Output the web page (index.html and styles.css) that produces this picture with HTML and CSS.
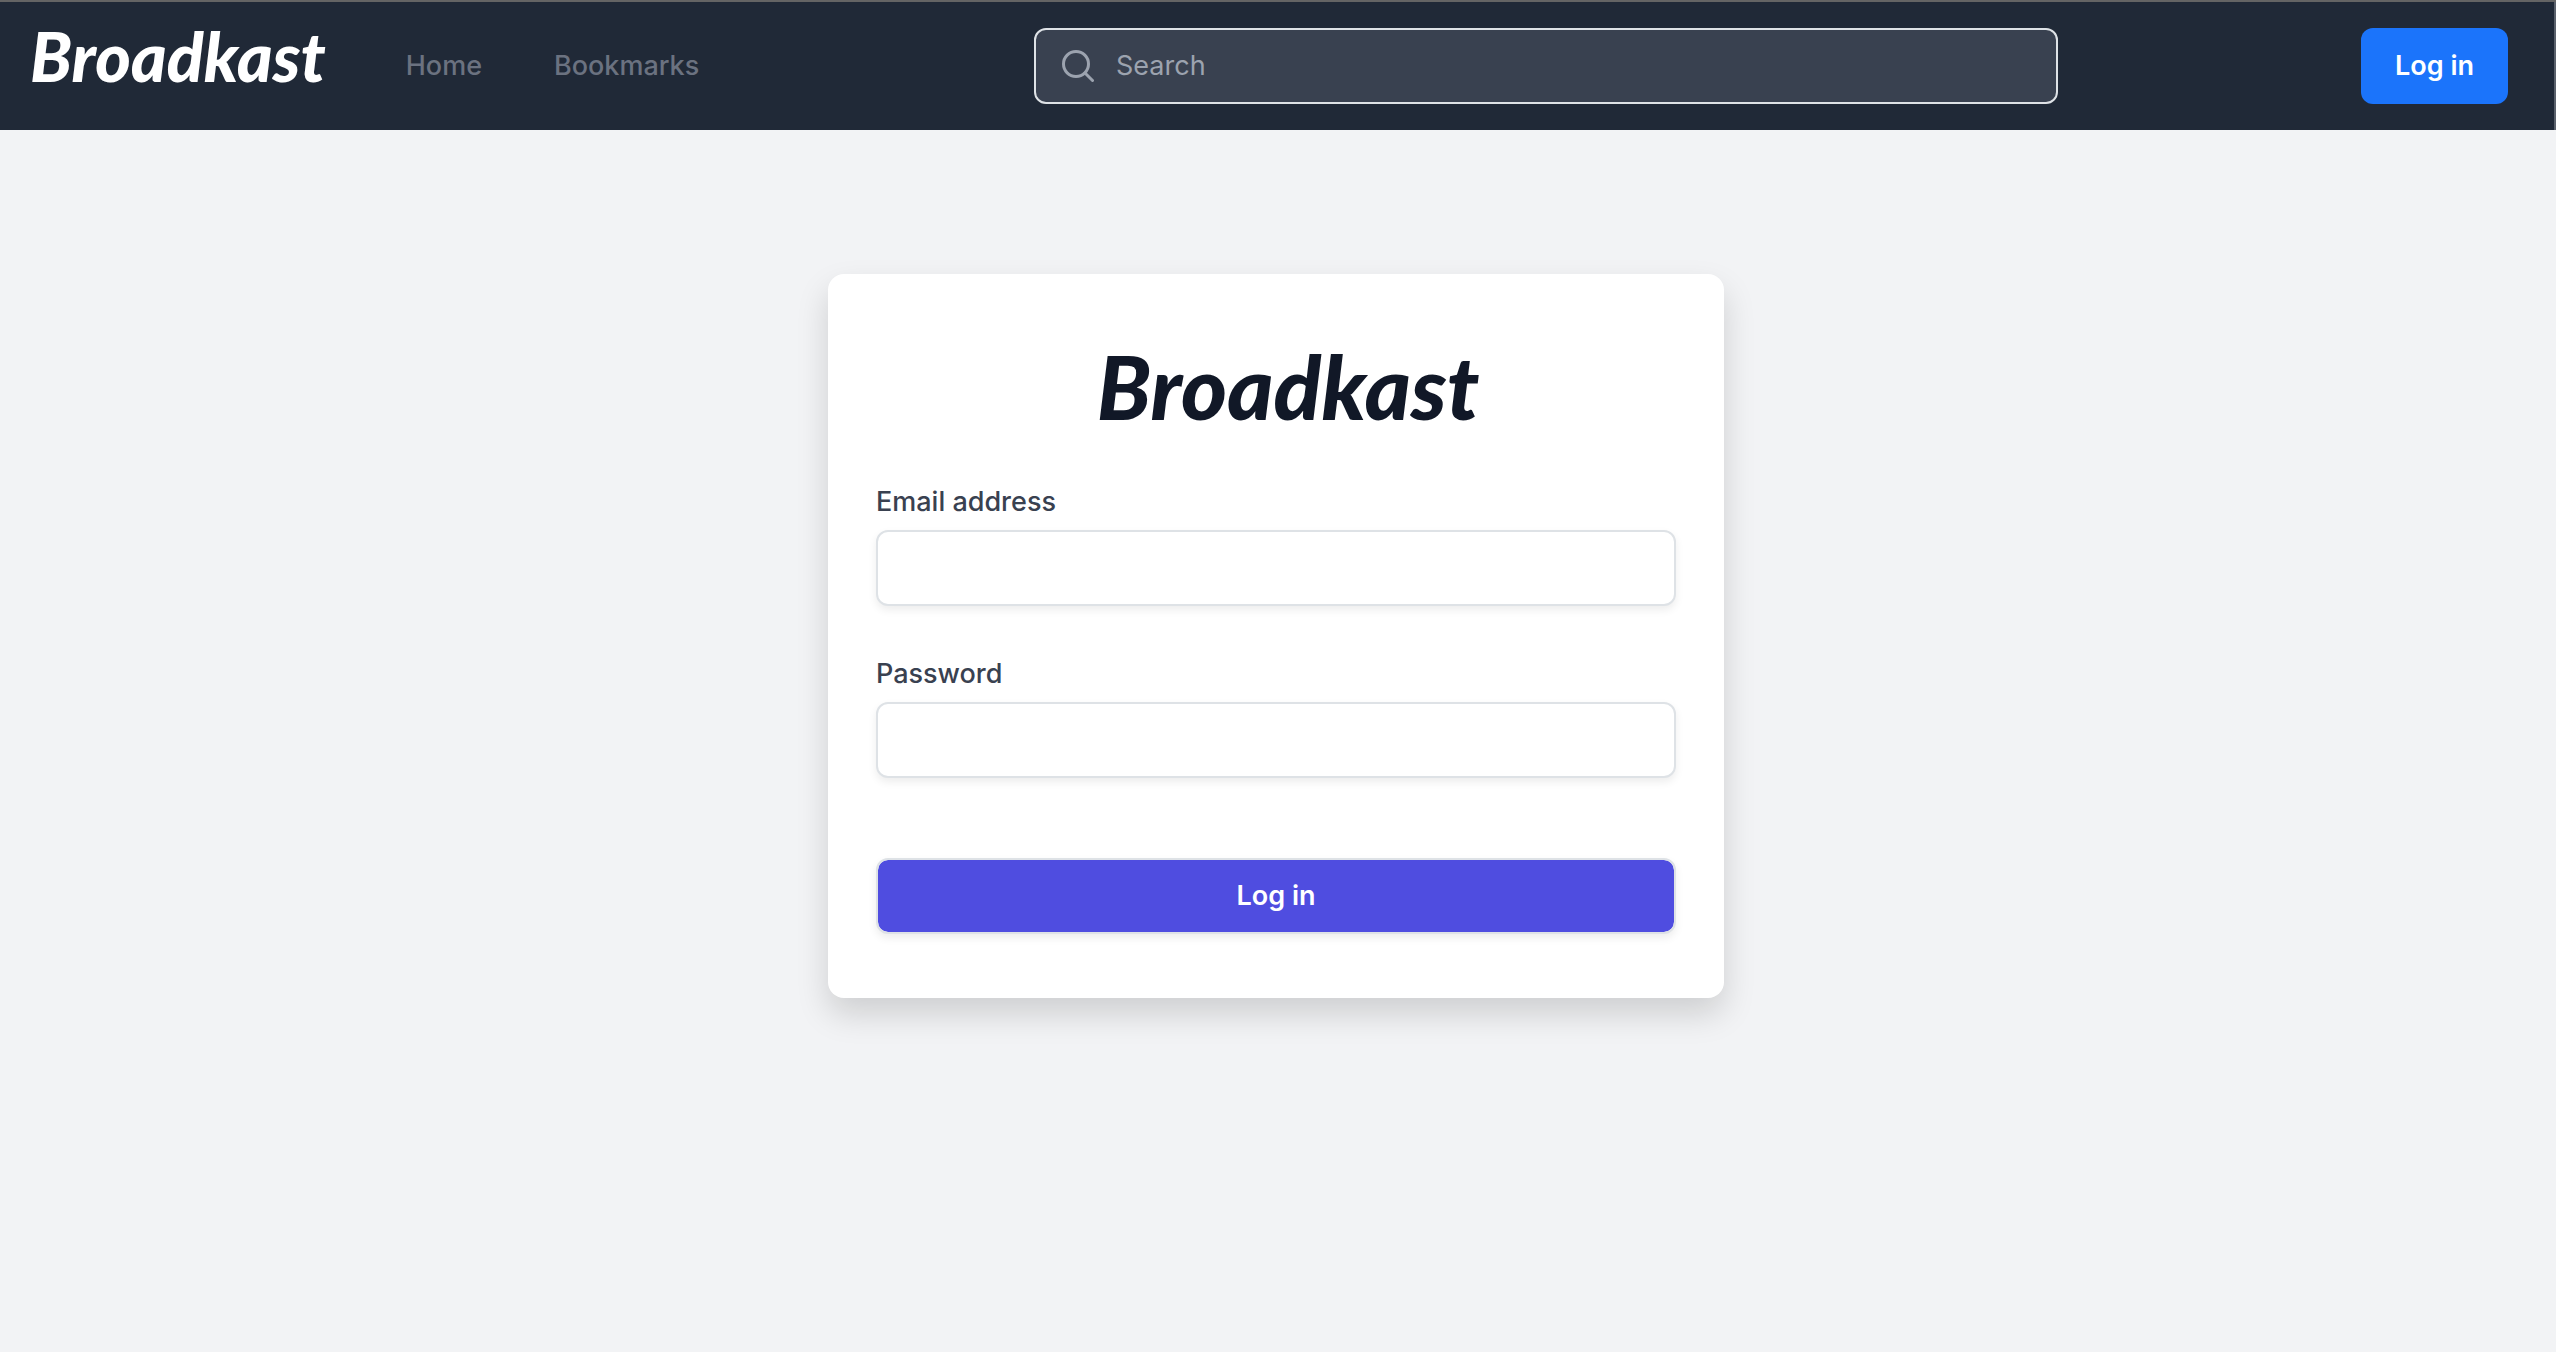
FILE: index.html
```html
<!DOCTYPE html>
<html lang="en">
<head>
  <meta charset="utf-8">
  <meta name="viewport" content="width=device-width, initial-scale=1">
  <title>Broadkast - Log in</title>
  <link rel="stylesheet" href="styles.css">
</head>
<body>
  <header class="navbar">
    <div class="navbar-start">
      <a class="wordmark wordmark-light" href="#">Broadkast</a>
      <nav class="nav-links">
        <a class="nav-link" href="#">Home</a>
        <a class="nav-link" href="#">Bookmarks</a>
      </nav>
    </div>
    <form class="search" role="search">
      <svg class="search-icon" viewBox="0 0 32 32" fill="none" stroke="currentColor" stroke-width="3" stroke-linecap="round" aria-hidden="true">
        <circle cx="14" cy="14" r="12.5"/>
        <path d="M23 23l7.500 7.500"/>
      </svg>
      <input class="search-input" type="search" placeholder="Search" aria-label="Search">
    </form>
    <div class="navbar-end">
      <button class="button-nav" type="button">Log in</button>
    </div>
  </header>
  <main class="page">
    <form class="card">
      <h1 class="wordmark wordmark-dark">Broadkast</h1>
      <div class="field">
        <label class="label" for="email">Email address</label>
        <input class="input" id="email" type="email">
      </div>
      <div class="field">
        <label class="label" for="password">Password</label>
        <input class="input" id="password" type="password">
      </div>
      <button class="button-submit" type="submit">Log in</button>
    </form>
  </main>
</body>
</html>
```
FILE: styles.css
```css
*,
*::before,
*::after {
  box-sizing: border-box;
}

body {
  margin: 0;
  min-height: 100vh;
  background: #f2f3f5;
  color: #394150;
  font-family: Inter, "Liberation Sans", sans-serif;
  font-size: 27px;
  font-weight: 500;
  line-height: 40px;
}

a {
  text-decoration: none;
}

input,
button {
  font: inherit;
}

.navbar {
  display: grid;
  grid-template-columns: minmax(0, 1034fr) minmax(0, 1024fr) minmax(0, 498fr);
  align-items: center;
  padding: 26px 0;
  background: #202937;
  border-top: 2px solid #646464;
  box-shadow: inset -2px 0 #5a616c;
}

.navbar-start {
  display: flex;
  align-items: center;
  gap: 80px;
  padding-left: 30px;
}

.wordmark {
  margin: 0;
  font-family: Lato, "Liberation Sans", sans-serif;
  font-style: italic;
  font-weight: 900;
}

.wordmark-light {
  padding-bottom: 20px;
  font-size: 68px;
  line-height: 56px;
  color: #fff;
}

.wordmark-dark {
  padding-left: 24px;
  font-size: 88px;
  line-height: 96px;
  text-align: center;
  color: #111827;
}

.nav-links {
  display: flex;
  gap: 72px;
}

.nav-link {
  color: #6b7280;
}

.search {
  display: flex;
  align-items: center;
  gap: 22px;
  height: 76px;
  padding: 0 26px;
  background: #394150;
  border: 2px solid #dee2e6;
  border-radius: 12px;
  color: #9ca3af;
}

.search-icon {
  flex: none;
  width: 32px;
  height: 32px;
}

.search-input {
  flex: 1;
  min-width: 0;
  padding: 0;
  border: 0;
  outline: 0;
  background: transparent;
  color: #fff;
  font-weight: 400;
}

.search-input::placeholder {
  color: #9ca3af;
  opacity: 1;
}

.navbar-end {
  display: flex;
  justify-content: flex-end;
  padding-right: 48px;
}

.button-nav {
  padding: 18px 34px;
  border: 0;
  border-radius: 12px;
  background: #1b74fb;
  color: #fff;
  font-weight: 600;
}

.page {
  padding: 144px 28px 144px 24px;
}

.card {
  display: flex;
  flex-direction: column;
  gap: 48px;
  max-width: 896px;
  margin: 0 auto;
  padding: 64px 48px;
  background: #fff;
  border-radius: 16px;
  box-shadow: 0 16px 32px rgba(0, 0, 0, 0.15);
}

.field {
  display: flex;
  flex-direction: column;
  gap: 8px;
}

.input,
.button-submit {
  width: 100%;
  height: 76px;
  padding: 0 24px;
  border: 2px solid #dee2e6;
  border-radius: 12px;
  background: #fff;
  box-shadow: 0 4px 8px rgba(0, 0, 0, 0.075);
}

.button-submit {
  margin-top: 32px;
  background: #4f4de0;
  background-clip: padding-box;
  color: #fff;
  font-weight: 600;
}
```
